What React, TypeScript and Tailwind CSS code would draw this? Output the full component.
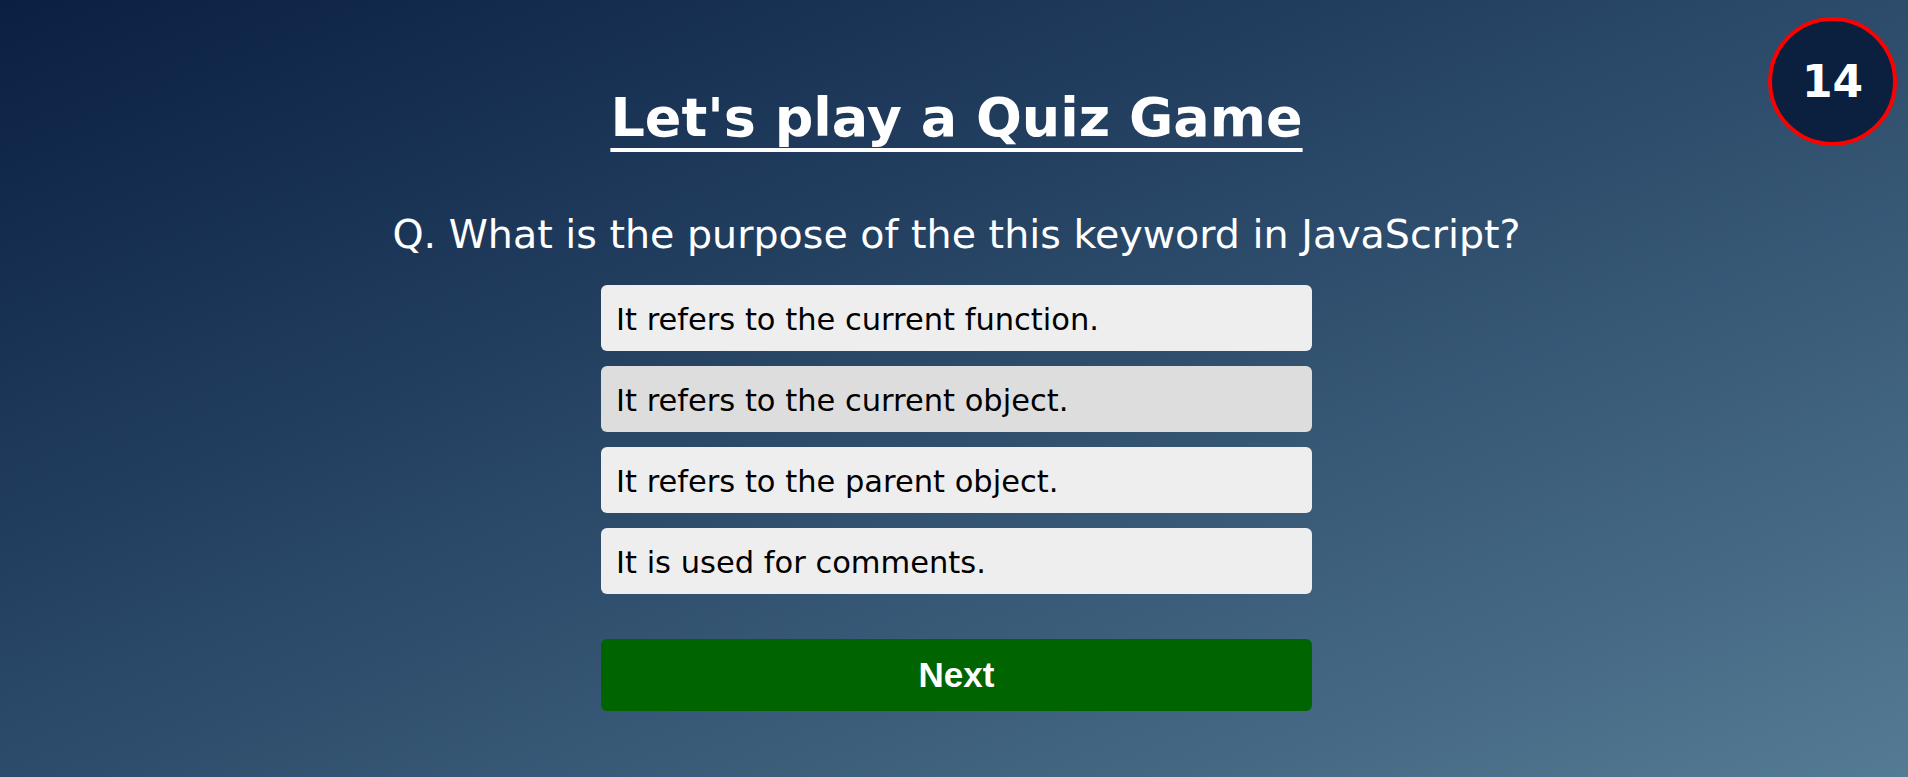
import { useState } from "react";

const OPTIONS = [
  "It refers to the current function.",
  "It refers to the current object.",
  "It refers to the parent object.",
  "It is used for comments.",
];

export default function App() {
  const [hovered] = useState(1);

  return (
    <div className="relative min-h-screen w-full overflow-hidden bg-gradient-to-br from-[#0a1f43] to-[#547b94] pl-[5px] font-['DejaVu_Sans',sans-serif] text-white">
      {/* timer */}
      <div className="absolute right-[11px] top-[17px] flex h-[129px] w-[129px] items-center justify-center rounded-full border-4 border-[#ff0000] bg-[#0b1f3f]">
        <span className="text-[44px] font-bold leading-none">14</span>
      </div>

      <div className="mx-auto flex w-[711px] flex-col items-center pt-[85px]">
        <h1 className="whitespace-nowrap text-[54px] font-bold leading-[66px] underline decoration-4 underline-offset-[12px] [text-decoration-skip-ink:none]">
          Let's play a Quiz Game
        </h1>

        <p className="mt-[59px] whitespace-nowrap text-[39.6px] leading-[48px]">
          Q. What is the purpose of the this keyword in JavaScript?
        </p>

        <div className="mt-[27px] flex w-full flex-col gap-[15px]">
          {OPTIONS.map((opt, i) => (
            <button
              key={opt}
              className={`flex h-[66px] w-full items-center rounded-md px-[15px] pt-[3px] text-left text-[30.5px] text-black ${
                i === hovered ? "bg-[#dddddd]" : "bg-[#eeeeee]"
              }`}
            >
              {opt}
            </button>
          ))}
        </div>

        <button className="mt-[45px] flex h-[72px] w-full items-center justify-center rounded-md bg-[#006400] font-['Liberation_Sans',sans-serif] text-[35px] font-bold text-white">
          Next
        </button>
      </div>
    </div>
  );
}
